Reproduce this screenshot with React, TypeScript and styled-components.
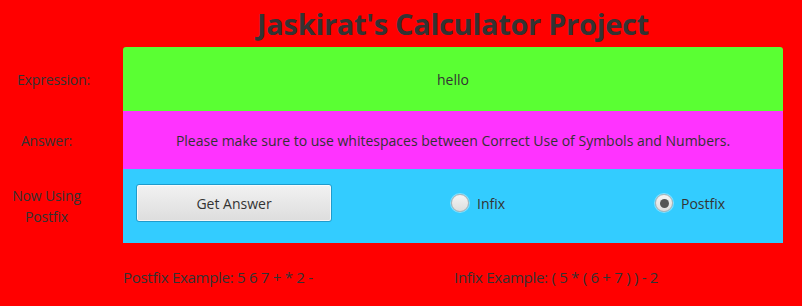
import React from "react";
import styled, { createGlobalStyle } from "styled-components";

const GlobalStyle = createGlobalStyle`
  html, body {
    margin: 0;
    padding: 0;
    background: #ff0000;
  }
  body {
    font-family: "Open Sans", "Noto Sans", sans-serif;
    color: #333333;
  }
`;

const SPage = styled.div`
  width: 802px;
  height: 306px;
  background: #ff0000;
  display: grid;
  grid-template-columns: 123px 660px 19px;
  grid-template-rows: 47px 64px 58px 74px 1fr;
`;

const STitle = styled.h1`
  grid-column: 2;
  margin: 0;
  font-family: "Open Sans", "Noto Sans", sans-serif;
  font-weight: 700;
  font-size: 29px;
  line-height: 47px;
  text-align: center;
  color: #333333;
  letter-spacing: -0.3px;
`;

const SLabel = styled.div<{ $shift?: number }>`
  grid-column: 1;
  display: flex;
  align-items: center;
  justify-content: center;
  text-align: center;
  font-size: 14px;
  line-height: 21px;
  letter-spacing: -0.15px;
  color: #333333;
  padding: 0 30px 0 ${({ $shift }) => $shift ?? 0}px;
`;

const SField = styled.div<{ $bg: string; $top?: boolean }>`
  grid-column: 2;
  background: ${({ $bg }) => $bg};
  border-radius: ${({ $top }) => ($top ? "3px 3px 0 0" : "0")};
  display: flex;
  align-items: center;
  justify-content: center;
  font-size: 14px;
  color: #333333;
`;

const SControls = styled.div`
  grid-column: 2;
  background: #33ccff;
  display: grid;
  grid-template-columns: 315px 204px 1fr;
  align-items: center;
  padding: 0 0 6px 13px;
`;

const SButton = styled.button`
  width: 196px;
  height: 38px;
  border: 1px solid #1f9bcc;
  border-radius: 3px;
  background: linear-gradient(#f2f2f2, #dddddd);
  box-shadow: inset 0 0 0 1px rgba(255, 255, 255, 0.7);
  font-family: "Open Sans", "Noto Sans", sans-serif;
  font-size: 14px;
  color: #333333;
  padding: 0;
`;

const SRadio = styled.label`
  display: flex;
  align-items: center;
  gap: 8px;
  font-size: 14px;
  color: #333333;
`;

const SCircle = styled.span<{ $checked?: boolean }>`
  width: 18px;
  height: 18px;
  border-radius: 50%;
  box-sizing: border-box;
  border: 1px solid #b5b5b5;
  background: linear-gradient(#f4f4f4, #dedede);
  box-shadow: 0 0 0 1px rgba(255, 255, 255, 0.4);
  display: flex;
  align-items: center;
  justify-content: center;
  &::after {
    content: "";
    display: ${({ $checked }) => ($checked ? "block" : "none")};
    width: 9px;
    height: 9px;
    border-radius: 50%;
    background: #555555;
  }
`;

const SExamples = styled.div`
  grid-column: 2 / 4;
  display: grid;
  grid-template-columns: 331px 1fr;
  align-items: center;
  padding-top: 4px;
  font-size: 15px;
  color: #333333;
`;

const SExample = styled.span`
  letter-spacing: -0.28px;
`;

export default function App() {
  return (
    <>
      <GlobalStyle />
      <SPage>
        <STitle>Jaskirat's Calculator Project</STitle>
        <div />
        <SLabel $shift={14}>Expression:</SLabel>
        <SField $bg="#5aff33" $top>
          hello
        </SField>
        <div />
        <SLabel>Answer:</SLabel>
        <SField $bg="#ff33ff">
          Please make sure to use whitespaces between Correct Use of Symbols and Numbers.
        </SField>
        <div />
        <SLabel>
          Now Using
          <br />
          Postfix
        </SLabel>
        <SControls>
          <div>
            <SButton type="button">Get Answer</SButton>
          </div>
          <SRadio>
            <SCircle />
            Infix
          </SRadio>
          <SRadio>
            <SCircle $checked />
            Postfix
          </SRadio>
        </SControls>
        <div />
        <div />
        <SExamples>
          <SExample>Postfix Example: 5 6 7 + * 2 -</SExample>
          <SExample>Infix Example: ( 5 * ( 6 + 7 ) ) - 2</SExample>
        </SExamples>
      </SPage>
    </>
  );
}
